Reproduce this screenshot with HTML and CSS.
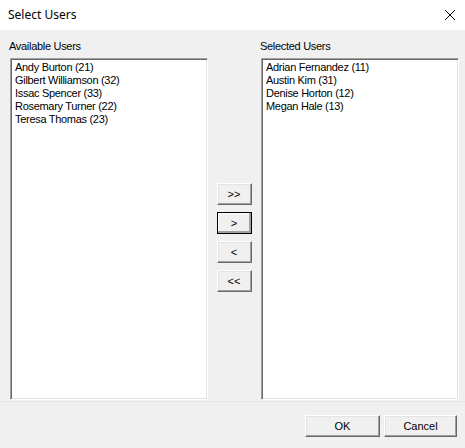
FILE: index.html
```html
<!DOCTYPE html>
<html>
<head>
<meta charset="utf-8">
<link rel="stylesheet" href="styles.css">
</head>
<body>
<div class="window">
  <div class="titlebar">
    <span class="title">Select Users</span>
    <svg class="close" width="12" height="12" viewBox="0 0 12 12"><path d="M1 1 L11 11 M11 1 L1 11" stroke="#000" stroke-width="1" fill="none"/></svg>
  </div>
  <div class="client">
    <div class="main">
      <div class="panel">
        <div class="label">Available Users</div>
        <ul class="listbox">
          <li>Andy Burton (21)</li>
          <li>Gilbert Williamson (32)</li>
          <li>Issac Spencer (33)</li>
          <li>Rosemary Turner (22)</li>
          <li>Teresa Thomas (23)</li>
        </ul>
      </div>
      <div class="mover">
        <button class="btn small">&gt;&gt;</button>
        <button class="btn small default">&gt;</button>
        <button class="btn small">&lt;</button>
        <button class="btn small">&lt;&lt;</button>
      </div>
      <div class="panel">
        <div class="label">Selected Users</div>
        <ul class="listbox">
          <li>Adrian Fernandez (11)</li>
          <li>Austin Kim (31)</li>
          <li>Denise Horton (12)</li>
          <li>Megan Hale (13)</li>
        </ul>
      </div>
    </div>
    <div class="footer">
      <button class="btn ok">OK</button>
      <button class="btn cancel">Cancel</button>
    </div>
  </div>
</div>
</body>
</html>
```
FILE: styles.css
```css
html, body {
  margin: 0;
  padding: 0;
  background: #f0f0f0;
}
.window {
  width: 465px;
  height: 448px;
  display: flex;
  flex-direction: column;
  font-family: "Liberation Sans", Arial, sans-serif;
  font-size: 11px;
  color: #000;
}
.titlebar {
  height: 30px;
  background: #fff;
  display: flex;
  align-items: center;
  justify-content: space-between;
  padding: 0 9px 0 8px;
  flex: none;
}
.title {
  font-size: 12px;
  font-family: "Noto Sans", "Liberation Sans", sans-serif;
  margin-top: -1px;
}
.close {
  display: block;
}
.client {
  flex: 1;
  background: #f0f0f0;
  display: flex;
  flex-direction: column;
}
.main {
  display: grid;
  grid-template-columns: 199px 52px 199px;
  padding: 10px 0 1px 9px;
  border-bottom: 1px solid #e6e6e6;
}
.panel {
  display: flex;
  flex-direction: column;
}
.label {
  height: 13px;
  line-height: 13px;
  margin-bottom: 5px;
  letter-spacing: -0.3px;
}
.listbox {
  list-style: none;
  margin: 0 0 0 1px;
  padding: 2px 3px 0 3px;
  height: 338px;
  background: #fff;
  border: 1px solid;
  border-color: #a0a0a0 #fff #fff #a0a0a0;
  box-shadow: inset 1px 1px 0 #696969, inset -1px -1px 0 #e3e3e3;
}
.listbox li {
  height: 13px;
  line-height: 13px;
  padding-left: 1px;
  white-space: nowrap;
  letter-spacing: -0.3px;
}
.mover {
  display: flex;
  flex-direction: column;
  align-items: center;
  gap: 7px;
  padding-top: 143px;
}
.btn {
  font-family: "Liberation Sans", Arial, sans-serif;
  font-size: 11px;
  color: #000;
  background: #f0f0f0;
  border: 1px solid;
  border-color: #fff #696969 #696969 #fff;
  box-shadow: inset -1px -1px 0 #a0a0a0, inset 1px 1px 0 #e3e3e3;
  padding: 0;
  margin: 0;
  height: 22px;
}
.btn.small {
  width: 35px;
}
.btn.default {
  outline: 1px solid #000;
  outline-offset: -1px;
  box-shadow: inset -2px -2px 0 #a0a0a0, inset 1px 1px 0 #fff;
}
.btn.ok {
  width: 75px;
}
.btn.cancel {
  width: 73px;
}
.footer {
  display: flex;
  justify-content: flex-end;
  gap: 4px;
  padding: 13px 8px 0 0;
}
```
